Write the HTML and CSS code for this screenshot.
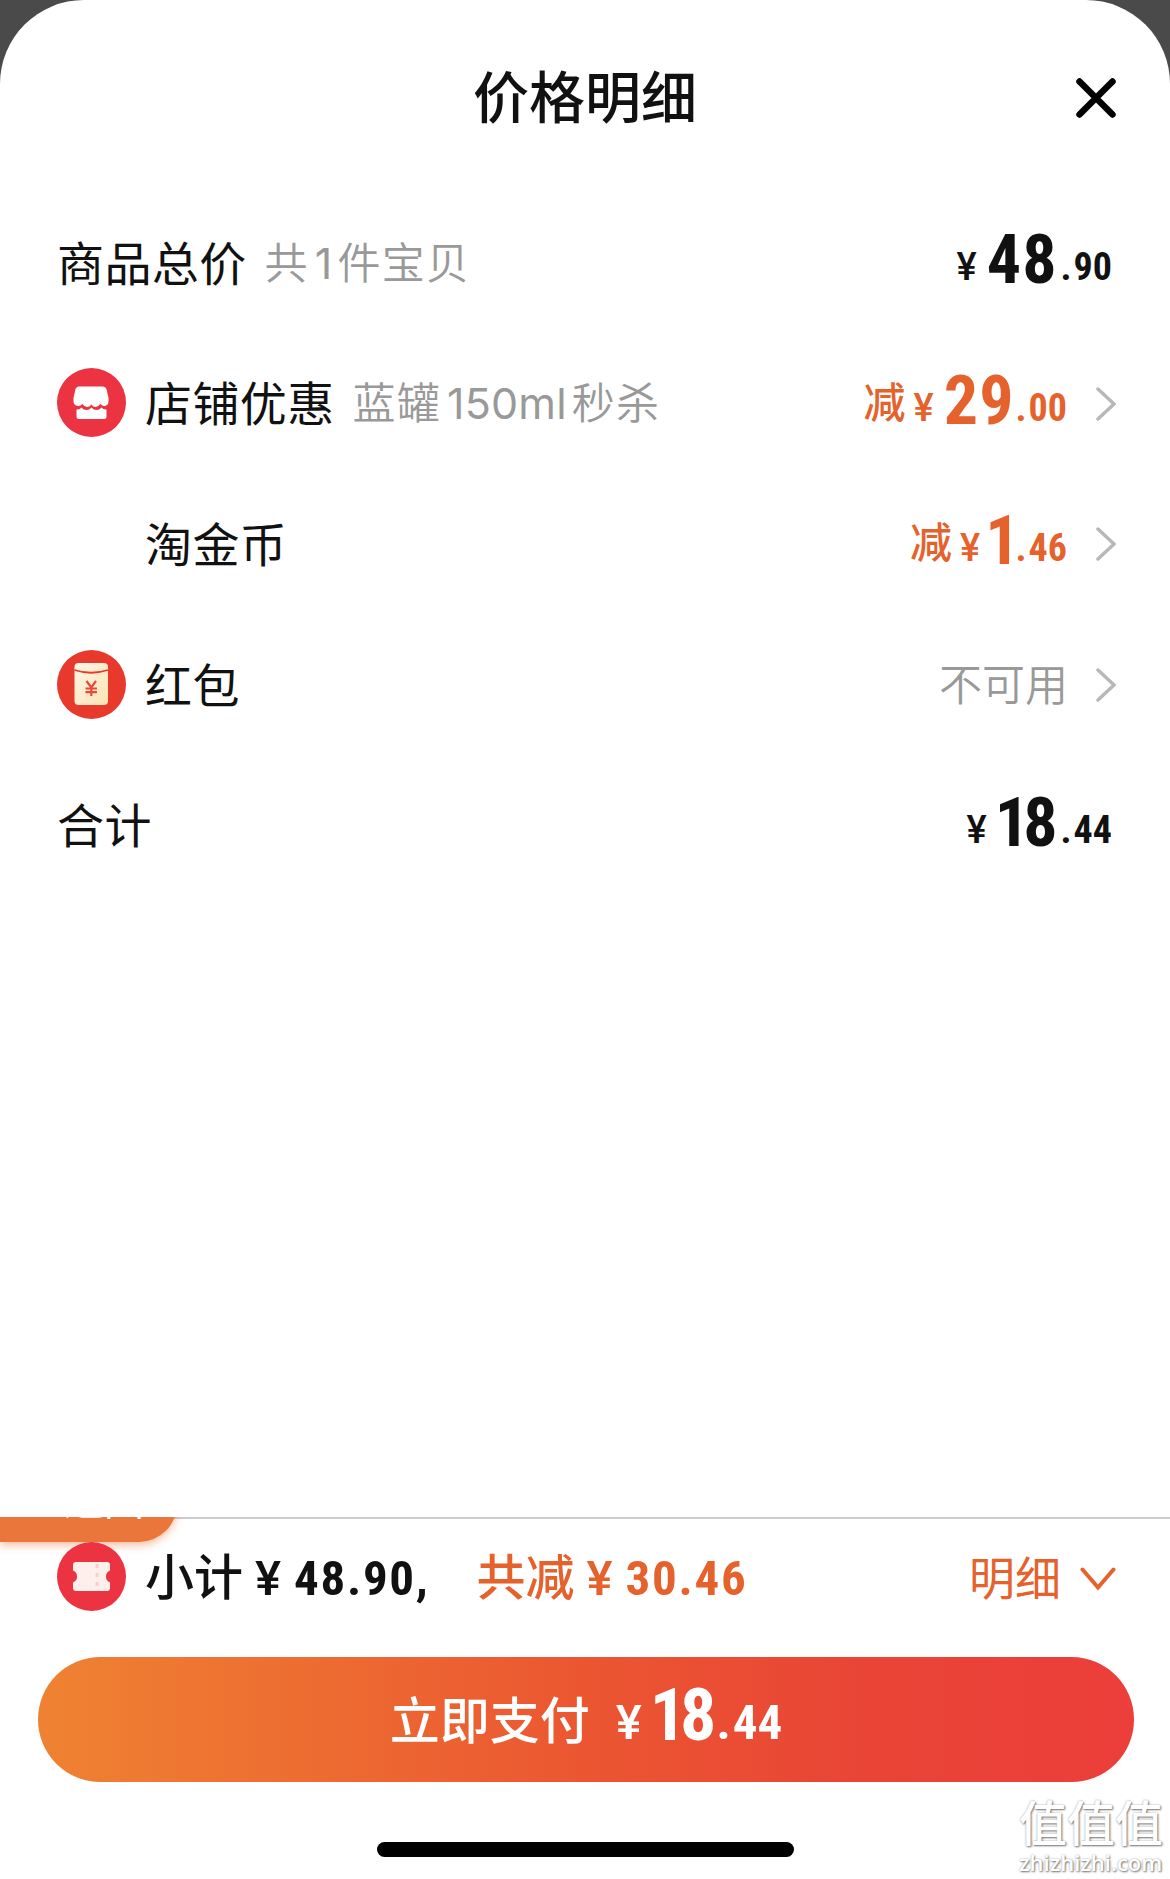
FILE: index.html
```html
<!DOCTYPE html>
<html lang="zh-CN">

<head>
    <meta charset="UTF-8">
    <meta name="viewport" content="width=device-width, initial-scale=1.0">
    <title>价格明细</title>
    <link rel="stylesheet" href="styles.css">
</head>

<body>
    <div class="sheet">
        <div class="header">
            <h1>价格明细</h1>
            <svg class="close" viewBox="0 0 40 40">
                <path d="M3.5 3.5L36.5 36.5M36.5 3.5L3.5 36.5" />
            </svg>
        </div>

        <div class="list">
            <div class="row">
                <span class="label">商品总价</span>
                <span class="note">共<span class="latin">1</span>件宝贝</span>
                <div class="price">
                    <span class="yen">¥</span><span class="big">48</span><span class="small"><i>.</i>90</span>
                </div>
            </div>

            <div class="row">
                <svg class="icon" viewBox="0 0 69 69">
                    <circle cx="34.5" cy="34.5" r="34.5" fill="#eb3342" />
                    <path fill="#fff" d="M23 18.500h23q2.500 0 3.500 2.500l2 9v3.500q0 3.500-3.500 4.500-2.500.300-4.700-2-2.200 3-4.700 3t-4.100-2.500q-2 2.500-4.500 2.500t-4.500-3q-2.200 2.300-4.700 2-4-.800-4.300-4.500V30l2-9q1-2.500 3-2.500z" />
                    <path fill="#fff" d="M19.500 41.500q3 .500 5-2 2 2.500 5 2.500t5-2.500q2 2.500 5 2.500t5-2.500q2 2.500 5 2v7q0 2.500-2.500 2.500h-25q-2.500 0-2.500-2.500z" />
                </svg>
                <span class="label">店铺优惠</span>
                <span class="note">蓝罐<span class="latin">150ml</span>秒杀</span>
                <div class="price off">
                    <span class="cut">减</span><span class="yen">¥</span><span class="big">29</span><span class="small"><i>.</i>00</span>
                </div>
                <svg class="arrow" viewBox="0 0 20 34"><path d="M2 2l16 15L2 32" /></svg>
            </div>

            <div class="row">
                <span class="icon"></span>
                <span class="label">淘金币</span>
                <div class="price off">
                    <span class="cut">减</span><span class="yen">¥</span><span class="big one solo">1</span><span class="small"><i>.</i>46</span>
                </div>
                <svg class="arrow" viewBox="0 0 20 34"><path d="M2 2l16 15L2 32" /></svg>
            </div>

            <div class="row">
                <svg class="icon" viewBox="0 0 69 69">
                    <defs>
                        <linearGradient id="packet" x1="0" y1="0" x2="1" y2="1">
                            <stop offset="0" stop-color="#fff6e6" />
                            <stop offset="1" stop-color="#fbe3b4" />
                        </linearGradient>
                    </defs>
                    <circle cx="34.5" cy="34.5" r="34.5" fill="#e8392d" />
                    <rect x="17.500" y="13" width="33.500" height="42" rx="4" fill="url(#packet)" />
                    <path d="M17.500 20q16.500 5.500 33.500 0" fill="none" stroke="#e8392d" stroke-width="1.800" />
                    <path d="M29.500 31l4.800 6.500L39 31M34.300 37.500V46M28.500 38.500h11.500M28.500 42.200h11.500" fill="none" stroke="#e8493a" stroke-width="2.200" />
                </svg>
                <span class="label">红包</span>
                <span class="disabled">不可用</span>
                <svg class="arrow" viewBox="0 0 20 34"><path d="M2 2l16 15L2 32" /></svg>
            </div>

            <div class="row">
                <span class="label">合计</span>
                <div class="price">
                    <span class="yen">¥</span><span class="big one">18</span><span class="small"><i>.</i>44</span>
                </div>
            </div>
        </div>

        <div class="footer">
            <div class="tag">返回</div>
            <div class="summary">
                <svg class="icon" viewBox="0 0 69 69">
                    <circle cx="34.5" cy="34.5" r="34.5" fill="#eb3342" />
                    <path fill="#fdf0ec" d="M19 20h31q3 0 3 3v5.500q-4 1.500-4 6t4 6V46q0 3-3 3H19q-3 0-3-3v-5.500q4-1.500 4-6t-4-6V23q0-3 3-3z" />
                    <path stroke="#f5cfc8" stroke-width="3" stroke-dasharray="4 5" d="M40 22v26" />
                </svg>
                <div class="subtotal">小计<span class="sum">¥<b>48.90,</b></span></div>
                <div class="saved">共减<span class="sum">¥<b>30.46</b></span></div>
                <span class="detail">明细</span>
                <svg class="down" viewBox="0 0 36 24"><path d="M2.500 2.500L18 20.500 33.500 2.500" /></svg>
            </div>
            <button class="pay">
                <span class="pay-text">立即支付</span><span class="yen">¥</span><span class="big one">18</span><span class="small"><i>.</i>44</span>
            </button>
            <div class="home-bar"></div>
        </div>
    </div>

    <div class="watermark">
        <div class="mark-name">值值值</div>
        <div class="mark-url">zhizhizhi.com</div>
    </div>
</body>

</html>
```
FILE: styles.css
```css
* {
    box-sizing: border-box;
}

body {
    margin: 0;
    position: relative;
    background-color: #4a4a4a;
    font-family: "Noto Sans CJK SC", sans-serif;
    color: #111;
}

.sheet {
    display: flex;
    flex-direction: column;
    height: 1879px;
    background-color: #fff;
    border-radius: 84px 84px 0 0;
}

/* Title bar */
.header {
    position: relative;
    height: 192px;
    text-align: center;
}

.header h1 {
    margin: 0;
    padding-top: 54px;
    font-size: 56px;
    font-weight: 500;
    line-height: 80px;
}

.close {
    position: absolute;
    top: 78px;
    right: 54px;
    width: 40px;
    height: 40px;
    fill: none;
    stroke: #000;
    stroke-width: 6.5;
    stroke-linecap: round;
}

/* Price rows */
.list {
    flex: 1;
    padding: 0 54px 0 57px;
}

.row {
    display: flex;
    align-items: center;
    height: 140.6px;
}

.icon {
    width: 69px;
    height: 69px;
    margin-right: 19px;
    flex: none;
}

.label {
    padding-bottom: 3px;
    font-size: 47px;
    line-height: 70px;
    font-weight: 400;
    letter-spacing: 0.4px;
}

.note {
    margin-left: 18px;
    padding-bottom: 2px;
    font-size: 43px;
    line-height: 70px;
    font-weight: 350;
    color: #999;
    letter-spacing: 1.2px;
}

.latin {
    margin: 0 5px 0 6px;
    font-family: Inter, sans-serif;
    font-weight: 400;
    letter-spacing: 0.2px;
}

.price {
    display: flex;
    align-items: baseline;
    margin-left: auto;
    margin-right: 4px;
    font-family: Roboto, sans-serif;
    font-weight: 700;
    font-stretch: 75%;
    line-height: 70px;
}

.yen {
    font-size: 38px;
    font-weight: 500;
    font-stretch: 100%;
}

.big {
    position: relative;
    top: 3px;
    margin-left: 10px;
    font-size: 68px;
    letter-spacing: 1px;
}

.one {
    margin-left: 8px;
    margin-right: 6px;
    letter-spacing: -6px;
}

.solo {
    margin-left: 5px;
    margin-right: 1px;
}

.small {
    font-size: 38px;
}

.small i {
    margin: 0 2px 0 3px;
    font-style: normal;
}

.off {
    color: #e5622c;
    margin-right: 29px;
}

.off .small i {
    margin-left: 1px;
}

.cut {
    position: relative;
    top: -3px;
    margin-right: 8px;
    font-family: "Noto Sans CJK SC", sans-serif;
    font-size: 42px;
    font-weight: 500;
}

.disabled {
    margin-left: auto;
    margin-right: 28px;
    padding-bottom: 4px;
    font-size: 43px;
    font-weight: 350;
    line-height: 70px;
    color: #999;
}

.arrow {
    width: 20px;
    height: 34px;
    margin-top: 2px;
    fill: none;
    stroke: #b8b8b8;
    stroke-width: 3.5;
    stroke-linecap: round;
}

/* Bottom bar */
.footer {
    position: relative;
    height: 362px;
    border-top: 2px solid #ccc;
}

.tag {
    position: absolute;
    top: -40px;
    left: 0;
    width: 177px;
    height: 63px;
    padding-left: 64px;
    border-radius: 0 0 38px 0;
    background-color: #eb763b;
    box-shadow: 0 3px 8px rgba(235, 118, 59, 0.5);
    clip-path: inset(38px -20px -20px 0);
    color: #fff;
    font-size: 40px;
    line-height: 38px;
}

.summary {
    position: relative;
    display: flex;
    align-items: center;
    height: 69px;
    margin: 23px 54px 0 57px;
}

.subtotal,
.saved {
    padding-bottom: 1px;
    font-size: 49px;
    font-weight: 500;
    line-height: 69px;
}

.saved {
    margin-left: 47px;
    color: #e5622c;
}

.sum {
    margin-left: 12px;
    font-family: Roboto, sans-serif;
}

.sum b {
    margin-left: 13px;
    font-weight: 700;
    font-stretch: 75%;
    letter-spacing: 1.7px;
}

.detail {
    margin-left: auto;
    margin-right: 19px;
    padding-bottom: 2px;
    font-size: 46px;
    line-height: 69px;
    color: #e5622c;
}

.down {
    width: 36px;
    height: 24px;
    margin-top: 4px;
    fill: none;
    stroke: #e5622c;
    stroke-width: 4;
    stroke-linecap: round;
}

.pay {
    display: flex;
    align-items: baseline;
    justify-content: center;
    width: 1096px;
    height: 125px;
    margin: 46px 0 0 38px;
    padding: 0;
    border: none;
    border-radius: 63px;
    background: linear-gradient(to right, #ef8232, #eb5631 50%, #e94436 76%, #ec3e3a);
    color: #fff;
    font-family: Roboto, sans-serif;
    font-weight: 700;
    font-stretch: 75%;
    line-height: 116px;
}

.pay-text {
    margin-right: 26px;
    font-family: "Noto Sans CJK SC", sans-serif;
    font-size: 50px;
    font-weight: 500;
}

.pay .yen,
.pay .small {
    font-size: 49px;
}

.pay .big {
    top: 1px;
    margin-right: 3px;
    font-size: 72px;
}

.home-bar {
    width: 417px;
    height: 15px;
    margin: 60px auto 0;
    border-radius: 8px;
    background-color: #000;
}

/* Site mark over the bottom right corner */
.watermark {
    position: absolute;
    right: 7px;
    bottom: 1px;
    width: 144px;
    color: #fff;
    text-shadow: 1px 1px 2px #777, 0 0 2px #aaa;
    white-space: nowrap;
}

.mark-name {
    font-size: 48px;
    line-height: 52px;
    font-weight: 500;
}

.mark-url {
    font-family: "Open Sans", sans-serif;
    font-size: 22px;
    line-height: 32px;
    font-weight: 600;
}
```
